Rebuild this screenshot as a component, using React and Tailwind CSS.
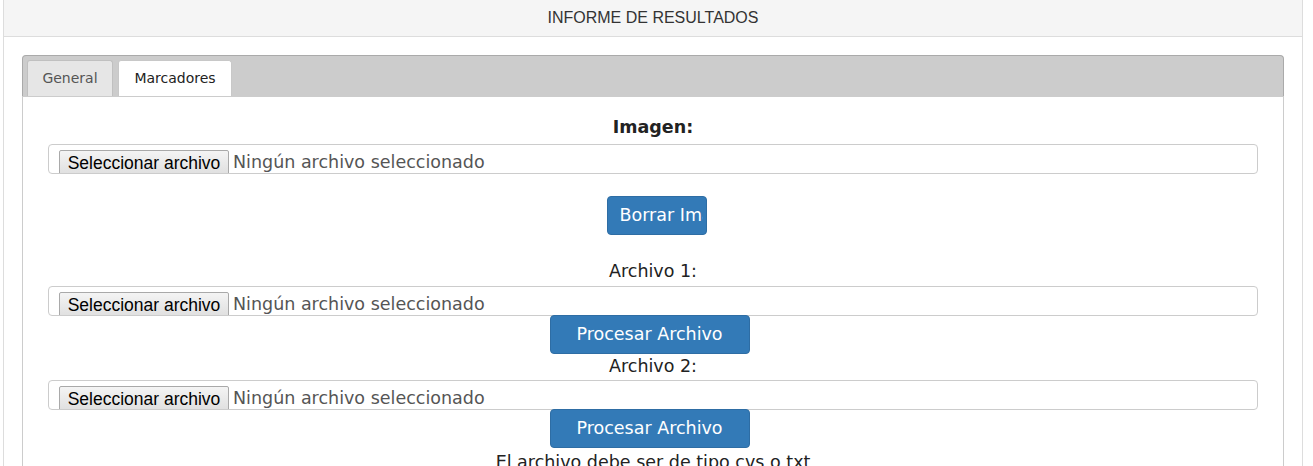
import React from 'react';

const verdana = "font-['DejaVu_Sans',Verdana,sans-serif]";

function FileInput() {
    return (
        <div className="h-[30px] rounded-[4px] border border-[#ccc] overflow-hidden flex items-start pl-[10px] pt-[5px] whitespace-nowrap">
            <span className="w-[170px] h-[27px] shrink-0 text-center border border-[#a9a9a9] rounded-[2px] bg-gradient-to-b from-[#f4f4f4] to-[#dedede] font-['Liberation_Sans',Arial,sans-serif] text-[17.5px] leading-[24px] text-black">
                Seleccionar archivo
            </span>
            <span className={`ml-[4px] ${verdana} text-[17.5px] leading-[24px] text-[#555]`}>
                Ningún archivo seleccionado
            </span>
        </div>
    );
}

function BlueButton({ children, className = '' }) {
    return (
        <button
            type="button"
            className={`h-[39px] rounded-[4px] border border-[#2e6da4] bg-[#337ab7] text-white ${verdana} text-[17.5px] leading-[37px] overflow-hidden whitespace-nowrap ${className}`}
        >
            {children}
        </button>
    );
}

export default function App() {
    return (
        <div className="w-[1313px] h-[466px] bg-white overflow-hidden">
            <div className="ml-[3px] w-[1300px] border-x border-[#ddd] min-h-[466px]">
                {/* panel heading */}
                <div className="h-[37px] bg-[#f5f5f5] border-b border-[#ddd] flex items-center justify-center font-['Liberation_Sans',Arial,sans-serif] text-[16px] text-[#333] pb-px">
                    INFORME DE RESULTADOS
                </div>

                <div className="px-[18px] pt-[18px]">
                    {/* tabs */}
                    <div className="h-[41px] rounded-t-[4px] border border-b-0 border-[#aaa] bg-[#ccc] pl-[4px] pt-[4px] flex items-end gap-[5px]">
                        <div className={`w-[86px] h-[36px] rounded-t-[3px] border border-b-0 border-[#c0c0c0] bg-[#e6e6e6] flex items-center justify-center ${verdana} text-[14px] text-[#555]`}>
                            General
                        </div>
                        <div className={`w-[114px] h-[36px] rounded-t-[3px] border border-b-0 border-[#c8c8c8] bg-white flex items-center justify-center ${verdana} text-[14px] text-[#222]`}>
                            Marcadores
                        </div>
                    </div>

                    {/* tab content */}
                    <div className={`border border-[#ccc] bg-white px-[25px] pt-[19px] pb-[20px] ${verdana} text-[17.5px] text-[#222]`}>
                        <div className="h-[22px] leading-[22px] text-center font-bold">Imagen:</div>
                        <div className="mt-[6px]">
                            <FileInput />
                        </div>
                        <div className="mt-[22px] flex justify-center pl-[7px]">
                            <BlueButton className="w-[100px] text-left pl-[12px]">
                                <span className="block w-[83px] overflow-hidden">Borrar Imagen</span>
                            </BlueButton>
                        </div>

                        <div className="mt-[25px] h-[22px] leading-[22px] text-center">Archivo 1:</div>
                        <div className="mt-[4px]">
                            <FileInput />
                        </div>
                        <div className="-mt-px flex justify-center pr-[7px]">
                            <BlueButton className="w-[200px] text-center">Procesar Archivo</BlueButton>
                        </div>

                        <div className="mt-[1px] h-[22px] leading-[22px] text-center">Archivo 2:</div>
                        <div className="mt-[3px]">
                            <FileInput />
                        </div>
                        <div className="-mt-px flex justify-center pr-[7px]">
                            <BlueButton className="w-[200px] text-center">Procesar Archivo</BlueButton>
                        </div>

                        <div className="mt-[3px] h-[22px] leading-[22px] text-center">El archivo debe ser de tipo cvs o txt</div>
                    </div>
                </div>
            </div>
        </div>
    );
}
